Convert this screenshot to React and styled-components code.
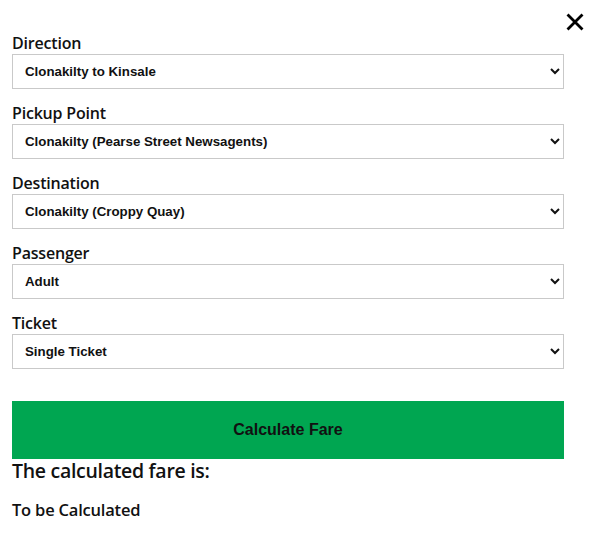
import React, { useState } from 'react';
import styled, { createGlobalStyle } from 'styled-components';

const GlobalStyle = createGlobalStyle`
  html, body {
    margin: 0;
    padding: 0;
    background: #fff;
  }
`;

const Modal = styled.div`
  position: relative;
  width: 593px;
  box-sizing: border-box;
  padding: 33px 29px 0 12px;
  font-family: 'Open Sans', 'Lato', sans-serif;
  color: #111;
`;

const CloseButton = styled.button`
  position: absolute;
  top: 13px;
  right: 9px;
  width: 18px;
  height: 18px;
  padding: 0;
  border: 0;
  background: none;
  cursor: pointer;
`;

const Field = styled.div`
  display: flex;
  flex-direction: column;
  margin-bottom: 14px;
`;

const Label = styled.label`
  font-size: 16px;
  font-weight: 600;
  line-height: 21px;
  letter-spacing: -0.2px;
  color: #111;
`;

const Select = styled.select`
  height: 35px;
  width: 100%;
  box-sizing: border-box;
  border: 1px solid #c9c9c9;
  border-radius: 0;
  background: #fff;
  padding: 0 8px;
  font-family: 'Liberation Sans', Arial, sans-serif;
  font-size: 13.3px;
  font-weight: 700;
  color: #111;
  outline: none;
`;

const CalcButton = styled.button`
  display: block;
  width: 100%;
  height: 58px;
  margin-top: 32px;
  border: 0;
  background: #00a651;
  font-family: 'Liberation Sans', Arial, sans-serif;
  font-size: 16px;
  font-weight: 700;
  color: #111;
  cursor: pointer;
`;

const ResultTitle = styled.h3`
  margin: 0;
  font-size: 19.5px;
  font-weight: 600;
  line-height: 24px;
  letter-spacing: -0.3px;
`;

const ResultValue = styled.p`
  margin: 17px 0 0;
  font-size: 16.5px;
  font-weight: 600;
  line-height: 20px;
  letter-spacing: -0.2px;
`;

const fields = [
  { label: 'Direction', options: ['Clonakilty to Kinsale', 'Kinsale to Clonakilty'] },
  { label: 'Pickup Point', options: ['Clonakilty (Pearse Street Newsagents)'] },
  { label: 'Destination', options: ['Clonakilty (Croppy Quay)'] },
  { label: 'Passenger', options: ['Adult', 'Child', 'Student'] },
  { label: 'Ticket', options: ['Single Ticket', 'Return Ticket'] },
];

export default function App() {
  const [fare] = useState('To be Calculated');

  return (
    <>
      <GlobalStyle />
      <Modal>
        <CloseButton aria-label="Close">
          <svg width="18" height="18" viewBox="0 0 18 18">
            <path d="M2.5 2.5 L15.5 15.5 M15.5 2.5 L2.5 15.5" stroke="#000" strokeWidth="2.8" strokeLinecap="square" />
          </svg>
        </CloseButton>
        {fields.map((f) => (
          <Field key={f.label}>
            <Label>{f.label}</Label>
            <Select defaultValue={f.options[0]}>
              {f.options.map((o) => (
                <option key={o}>{o}</option>
              ))}
            </Select>
          </Field>
        ))}
        <CalcButton>Calculate Fare</CalcButton>
        <ResultTitle>The calculated fare is:</ResultTitle>
        <ResultValue>{fare}</ResultValue>
      </Modal>
    </>
  );
}
